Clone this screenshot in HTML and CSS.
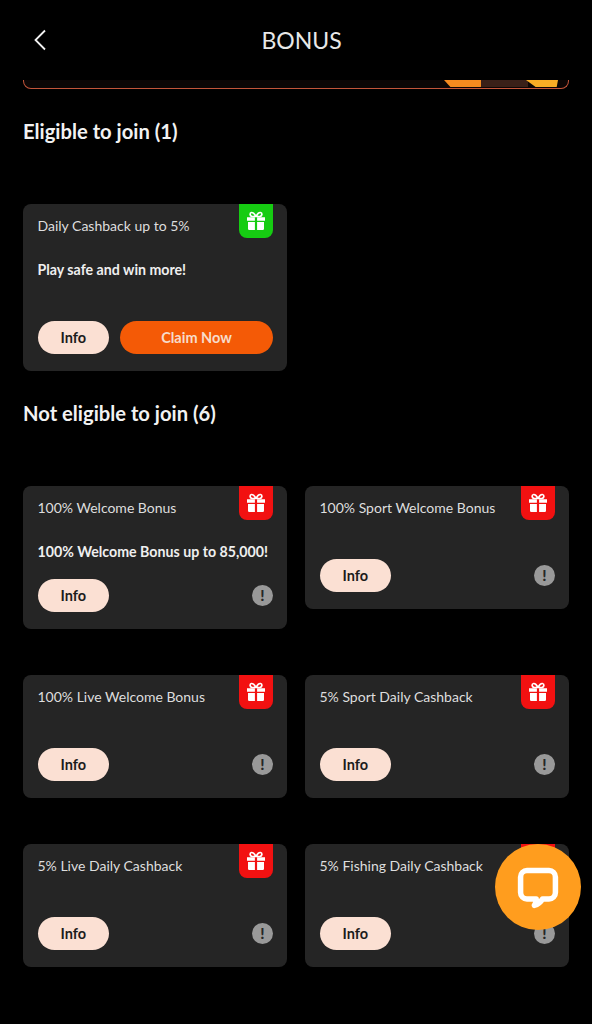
FILE: index.html
```html
<!DOCTYPE html>
<html>
<head>
    <title>Bonus</title>
    <link rel="stylesheet" href="styles.css">
</head>
<body>
    <svg width="0" height="0" class="defs">
        <symbol id="gift" viewBox="0 0 20 20">
            <path fill="#fff" d="M1 6.2h7.9v3.6H1zM11.1 6.2H19v3.6h-7.9zM2 11h6.9v8H3.2A1.2 1.2 0 0 1 2 17.800zM11.100 11H18v6.800a1.200 1.200 0 0 1-1.200 1.200h-5.700z"/>
            <path fill="none" stroke="#fff" stroke-width="1.700" d="M10 5.500C8.500 2.500 7 1.300 5.600 1.500 3.500 1.800 3.600 5 6 5.500zM10 5.500c1.500-3 3-4.200 4.400-4 2.100.3 2 3.500-.4 4z"/>
        </symbol>
    </svg>

    <div class="header">
        <svg class="back" width="14" height="22" viewBox="0 0 14 22">
            <path d="M12 1.500 2.500 11l9.500 9.500" fill="none" stroke="#f2f2f2" stroke-width="1.800"/>
        </svg>
        <h1>BONUS</h1>
    </div>

    <div class="banner">
        <span class="coin coin-orange"></span>
        <span class="coin coin-brown"></span>
        <span class="coin coin-yellow"></span>
    </div>

    <h2>Eligible to join (1)</h2>
    <div class="cards">
        <div class="card">
            <div class="badge badge-green"><svg width="20" height="20"><use href="#gift"/></svg></div>
            <div class="card-title">Daily Cashback up to 5%</div>
            <div class="card-body card-body-tall"><b>Play safe and win more!</b></div>
            <div class="card-actions">
                <button class="btn-info">Info</button>
                <button class="btn-claim">Claim Now</button>
            </div>
        </div>
    </div>

    <h2>Not eligible to join (6)</h2>
    <div class="cards">
        <div class="card">
            <div class="badge"><svg width="20" height="20"><use href="#gift"/></svg></div>
            <div class="card-title">100% Welcome Bonus</div>
            <div class="card-body card-body-text"><b>100% Welcome Bonus up to 85,000!</b></div>
            <div class="card-actions">
                <button class="btn-info">Info</button>
                <span class="alert">!</span>
            </div>
        </div>
        <div class="card">
            <div class="badge"><svg width="20" height="20"><use href="#gift"/></svg></div>
            <div class="card-title">100% Sport Welcome Bonus</div>
            <div class="card-body"></div>
            <div class="card-actions">
                <button class="btn-info">Info</button>
                <span class="alert">!</span>
            </div>
        </div>
        <div class="card">
            <div class="badge"><svg width="20" height="20"><use href="#gift"/></svg></div>
            <div class="card-title">100% Live Welcome Bonus</div>
            <div class="card-body"></div>
            <div class="card-actions">
                <button class="btn-info">Info</button>
                <span class="alert">!</span>
            </div>
        </div>
        <div class="card">
            <div class="badge"><svg width="20" height="20"><use href="#gift"/></svg></div>
            <div class="card-title">5% Sport Daily Cashback</div>
            <div class="card-body"></div>
            <div class="card-actions">
                <button class="btn-info">Info</button>
                <span class="alert">!</span>
            </div>
        </div>
        <div class="card">
            <div class="badge"><svg width="20" height="20"><use href="#gift"/></svg></div>
            <div class="card-title">5% Live Daily Cashback</div>
            <div class="card-body"></div>
            <div class="card-actions">
                <button class="btn-info">Info</button>
                <span class="alert">!</span>
            </div>
        </div>
        <div class="card">
            <div class="badge"><svg width="20" height="20"><use href="#gift"/></svg></div>
            <div class="card-title">5% Fishing Daily Cashback</div>
            <div class="card-body"></div>
            <div class="card-actions">
                <button class="btn-info">Info</button>
                <span class="alert">!</span>
            </div>
        </div>
    </div>

    <div class="chat">
        <svg width="44" height="44" viewBox="0 0 48 48">
            <path d="M12 6h24a7 7 0 0 1 7 7v17a7 7 0 0 1-7 7h-7c-2 3.500-5 6-9 7 1.500-2 2-4.500 2-7h-10a7 7 0 0 1-7-7V13a7 7 0 0 1 7-7z" fill="none" stroke="#fff" stroke-width="6" stroke-linejoin="round"/>
        </svg>
    </div>
</body>
</html>
```

FILE: styles.css
```css
* {
    box-sizing: border-box;
}

body {
    margin: 0;
    height: 1024px;
    overflow: hidden;
    background-color: #000;
    color: #f0f0f0;
    font-family: "Lato", "Liberation Sans", sans-serif;
}

.defs {
    position: absolute;
}

.header {
    position: relative;
    height: 80px;
    padding-left: 11px;
    display: flex;
    align-items: center;
    justify-content: center;
}

.header h1 {
    margin: 0;
    font-size: 23px;
    font-weight: 400;
    color: #e8e8e8;
}

.back {
    position: absolute;
    left: 33px;
    top: 29px;
}

.banner {
    position: relative;
    height: 9px;
    margin: 0 23px;
    background-color: #0c0605;
    border: 1.5px solid #c4553a;
    border-top: 0;
    border-radius: 0 0 8px 8px;
}

.coin {
    position: absolute;
    top: 0;
    height: 7px;
}

.coin-orange {
    left: 420px;
    width: 40px;
    background-color: #f58a1f;
    clip-path: polygon(0 0, 100% 0, 92% 100%, 16% 100%);
}

.coin-brown {
    left: 457px;
    width: 47px;
    background-color: #3a2018;
}

.coin-yellow {
    left: 502px;
    width: 32px;
    background-color: #f9ad25;
    clip-path: polygon(0 0, 100% 0, 96% 100%, 30% 100%);
}

h2 {
    margin: 0;
    padding: 30px 23px 0;
    height: 115px;
    font-size: 20.2px;
    line-height: 25px;
    font-weight: 700;
    color: #f2f2f2;
}

.cards {
    display: grid;
    grid-template-columns: 264px 264px;
    column-gap: 18px;
    row-gap: 46px;
    align-items: start;
    padding: 0 23px;
}

.card {
    position: relative;
    padding: 11px 14px 17px 14.5px;
    background-color: #252525;
    border-radius: 8px;
}

.card-title {
    font-size: 14px;
    line-height: 22px;
    color: #dedede;
}

.card-body {
    height: 40px;
    font-size: 14.2px;
    line-height: 22px;
    color: #efefef;
}

.card-body-text {
    height: 60px;
    padding-top: 22px;
}

.card-body-tall {
    height: 84px;
    padding-top: 22px;
}

.badge {
    position: absolute;
    top: 0;
    right: 14px;
    width: 34px;
    height: 34px;
    display: flex;
    align-items: center;
    justify-content: center;
    background-color: #f21111;
    border-radius: 0 0 8px 8px;
}

.badge-green {
    background-color: #16cc12;
}

.card-actions {
    display: flex;
    align-items: center;
    justify-content: space-between;
    gap: 11px;
}

button {
    height: 33px;
    border: 0;
    border-radius: 17px;
    font-family: inherit;
    font-size: 14.5px;
    font-weight: 700;
}

.btn-info {
    width: 71.5px;
    flex: none;
    background-color: #fbe0d3;
    color: #1c1c1c;
}

.btn-claim {
    flex: 1;
    background-color: #f45a06;
    color: #f7dccb;
}

.alert {
    width: 21px;
    height: 21px;
    border-radius: 50%;
    background-color: #999;
    color: #262626;
    font-size: 15px;
    font-weight: 900;
    line-height: 21px;
    text-align: center;
}

.chat {
    position: fixed;
    left: 495px;
    top: 844px;
    width: 86px;
    height: 86px;
    border-radius: 50%;
    background-color: #ff9d1e;
    display: flex;
    align-items: center;
    justify-content: center;
}
```
